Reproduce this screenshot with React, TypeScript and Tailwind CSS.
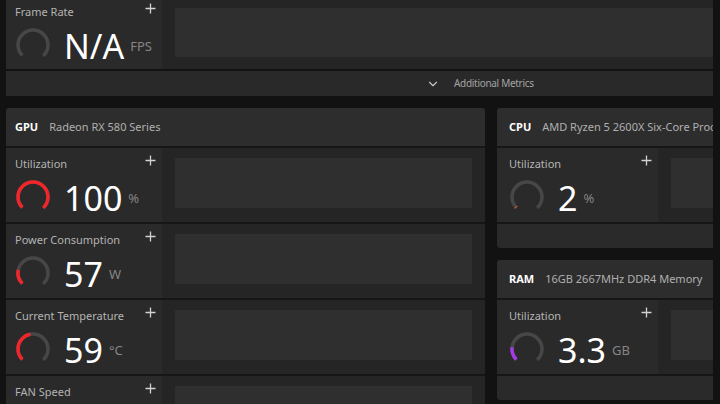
import { ChevronDown } from "lucide-react"

const font = { fontFamily: '"Noto Sans", "Open Sans", sans-serif' }

function Plus() {
  return (
    <svg width="11" height="11" viewBox="0 0 11 11" className="mt-[-1px] shrink-0">
      <path d="M5.5 0.5v10M0.5 5.5h10" stroke="#d2d2d2" strokeWidth="1.3" fill="none" />
    </svg>
  )
}

function Gauge({ frac, color }: { frac: number; color: string }) {
  const r = 15
  const c = 2 * Math.PI * r
  const len = c * 0.75
  return (
    <svg width="36" height="36" viewBox="0 0 36 36" className="shrink-0">
      <circle
        cx="18"
        cy="18"
        r={r}
        fill="none"
        stroke="#474747"
        strokeWidth="3.5"
        strokeDasharray={`${len} ${c}`}
        transform="rotate(135 18 18)"
      />
      {frac > 0 && (
        <circle
          cx="18"
          cy="18"
          r={r}
          fill="none"
          stroke={color}
          strokeWidth="3.5"
          strokeDasharray={`${len * frac} ${c}`}
          transform="rotate(135 18 18)"
        />
      )}
    </svg>
  )
}

type Metric = {
  label: string
  value: string
  unit: string
  frac: number
  color: string
}

function MetricCard({
  m,
  leftW,
  top = 8,
  pad = "pl-[9px]",
}: {
  m: Metric
  leftW: string
  top?: number
  pad?: string
}) {
  return (
    <div className={`${leftW} ${pad} shrink-0 bg-[#2a2a2a] pr-[6px]`} style={{ paddingTop: top }}>
      <div className="flex items-start justify-between">
        <span className="text-[11px] leading-[15px] text-[#b4b4b4]">{m.label}</span>
        <Plus />
      </div>
      <div className="mt-[8px] flex items-start">
        <Gauge frac={m.frac} color={m.color} />
        <span className="ml-[13px] mt-[2px] text-[34px] leading-none text-white">{m.value}</span>
        <span className="ml-[6px] mt-[13px] text-[13px] leading-none text-[#858585]">{m.unit}</span>
      </div>
    </div>
  )
}

function Graph({ pt = "pt-[10px]", pb = "pb-[14px]" }: { pt?: string; pb?: string }) {
  return (
    <div className={`flex-1 bg-[#252525] px-[13px] ${pt} ${pb}`}>
      <div className="h-full bg-[#2f2f2f]" />
    </div>
  )
}

function Row({ m, leftW = "w-[156px]", pad }: { m: Metric; leftW?: string; pad?: string }) {
  return (
    <div className="box-content flex h-[74px] border-t-2 border-[#161616]">
      <MetricCard m={m} leftW={leftW} pad={pad} />
      <Graph />
    </div>
  )
}

function Header({ tag, name, pad = "pl-[9px]" }: { tag: string; name: string; pad?: string }) {
  return (
    <div className={`flex h-[38px] items-center gap-[11px] overflow-hidden whitespace-nowrap bg-[#2d2d2d] ${pad}`}>
      <span className="text-[11px] font-bold text-white">{tag}</span>
      <span className="text-[11px] text-[#b0b0b0]">{name}</span>
    </div>
  )
}

const gpu: Metric[] = [
  { label: "Utilization", value: "100", unit: "%", frac: 1, color: "#f0262b" },
  { label: "Power Consumption", value: "57", unit: "W", frac: 0.21, color: "#f0262b" },
  { label: "Current Temperature", value: "59", unit: "°C", frac: 0.46, color: "#f0262b" },
  { label: "FAN Speed", value: "", unit: "", frac: 0, color: "#f0262b" },
]

export default function App() {
  return (
    <div className="h-[404px] w-[720px] overflow-hidden bg-[#121212] pl-[6px]" style={font}>
      <div className="h-full w-[707px] overflow-hidden">
        <div className="flex h-[69px] w-[760px]">
          <MetricCard
            m={{ label: "Frame Rate", value: "N/A", unit: "FPS", frac: 0, color: "#888" }}
            leftW="w-[156px]"
            top={4}
          />
          <Graph pt="pt-[8px]" pb="pb-[12px]" />
        </div>
        <div className="mt-[2px] flex h-[25px] w-[760px] items-center bg-[#292929] pl-[420px]">
          <ChevronDown size={14} strokeWidth={2} color="#c4c4c4" />
          <span className="ml-[14px] text-[10px] tracking-[-0.3px] text-[#a4a4a4]">Additional Metrics</span>
        </div>

        <div className="mt-[12px] flex w-[800px] gap-[12px]">
          <div className="w-[479px] shrink-0 overflow-hidden rounded-t-[3px]">
            <Header tag="GPU" name="Radeon RX 580 Series" />
            {gpu.map((m) => (
              <Row key={m.label} m={m} />
            ))}
          </div>

          <div className="w-[300px] shrink-0">
            <div className="overflow-hidden rounded-[3px]">
              <Header tag="CPU" name="AMD Ryzen 5 2600X Six-Core Processor" pad="pl-[12px]" />
              <Row
                m={{ label: "Utilization", value: "2", unit: "%", frac: 0.015, color: "#e8611c" }}
                leftW="w-[161px]"
                pad="pl-[12px]"
              />
              <div className="box-content h-[24px] border-t-2 border-[#161616] bg-[#2a2a2a]" />
            </div>
            <div className="mt-[12px] overflow-hidden rounded-[3px]">
              <Header tag="RAM" name="16GB 2667MHz DDR4 Memory" pad="pl-[12px]" />
              <Row
                m={{ label: "Utilization", value: "3.3", unit: "GB", frac: 0.19, color: "#a43be6" }}
                leftW="w-[161px]"
                pad="pl-[12px]"
              />
              <div className="box-content h-[24px] border-t-2 border-[#161616] bg-[#2a2a2a]" />
            </div>
          </div>
        </div>
      </div>
    </div>
  )
}
